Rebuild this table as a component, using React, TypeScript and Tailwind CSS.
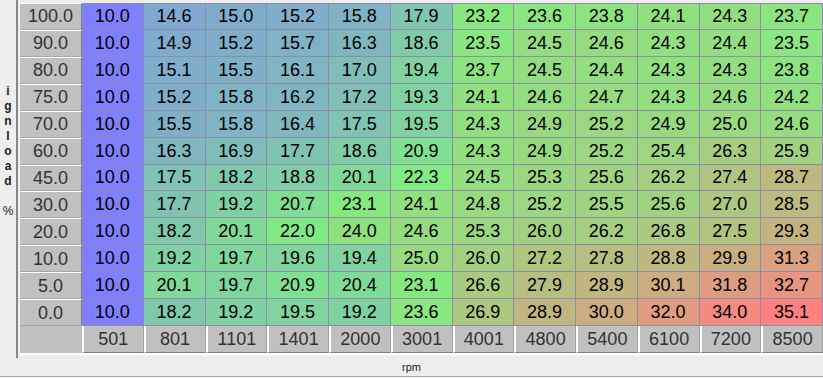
import React from "react";

const loads = ["100.0", "90.0", "80.0", "75.0", "70.0", "60.0", "45.0", "30.0", "20.0", "10.0", "5.0", "0.0"];
const rpms = ["501", "801", "1101", "1401", "2000", "3001", "4001", "4800", "5400", "6100", "7200", "8500"];

const table: number[][] = [
  [10.0, 14.6, 15.0, 15.2, 15.8, 17.9, 23.2, 23.6, 23.8, 24.1, 24.3, 23.7],
  [10.0, 14.9, 15.2, 15.7, 16.3, 18.6, 23.5, 24.5, 24.6, 24.3, 24.4, 23.5],
  [10.0, 15.1, 15.5, 16.1, 17.0, 19.4, 23.7, 24.5, 24.4, 24.3, 24.3, 23.8],
  [10.0, 15.2, 15.8, 16.2, 17.2, 19.3, 24.1, 24.6, 24.7, 24.3, 24.6, 24.2],
  [10.0, 15.5, 15.8, 16.4, 17.5, 19.5, 24.3, 24.9, 25.2, 24.9, 25.0, 24.6],
  [10.0, 16.3, 16.9, 17.7, 18.6, 20.9, 24.3, 24.9, 25.2, 25.4, 26.3, 25.9],
  [10.0, 17.5, 18.2, 18.8, 20.1, 22.3, 24.5, 25.3, 25.6, 26.2, 27.4, 28.7],
  [10.0, 17.7, 19.2, 20.7, 23.1, 24.1, 24.8, 25.2, 25.5, 25.6, 27.0, 28.5],
  [10.0, 18.2, 20.1, 22.0, 24.0, 24.6, 25.3, 26.0, 26.2, 26.8, 27.5, 29.3],
  [10.0, 19.2, 19.7, 19.6, 19.4, 25.0, 26.0, 27.2, 27.8, 28.8, 29.9, 31.3],
  [10.0, 20.1, 19.7, 20.9, 20.4, 23.1, 26.6, 27.9, 28.9, 30.1, 31.8, 32.7],
  [10.0, 18.2, 19.2, 19.5, 19.2, 23.6, 26.9, 28.9, 30.0, 32.0, 34.0, 35.1],
];

const MIN = 10.0;
const MAX = 35.1;

// blue -> green -> red, straight rgb blend
const cellColor = (v: number) => {
  const t = (v - MIN) / (MAX - MIN);
  let r, g, b;
  if (t < 0.5) {
    const s = t / 0.5;
    r = 128;
    g = 128 + 110 * s;
    b = 255 - 127 * s;
  } else {
    const s = (t - 0.5) / 0.5;
    r = 128 + 127 * s;
    g = 238 - 110 * s;
    b = 128;
  }
  return `rgb(${Math.round(r)}, ${Math.round(g)}, ${Math.round(b)})`;
};

const App: React.FC = () => {
  return (
    <div className="w-[823px] h-[378px] bg-[#eeeeee] overflow-hidden font-['Liberation_Sans',Arial,sans-serif]">
      <div className="flex h-[358px]">
        {/* y axis label */}
        <div className="w-[16px] pt-[84px] flex flex-col items-center text-[12px] font-bold leading-[15px] text-[#222]">
          {"ignload".split("").map((c, i) => (
            <span key={i}>{c}</span>
          ))}
          <span>&nbsp;</span>
          <span className="font-normal">%</span>
        </div>

        <div className="flex-1 border-l-2 border-[#888888] pl-[2px] pt-[3px] flex flex-col">
          <div className="flex flex-col h-[323px]">
            {table.map((row, ri) => (
              <div key={ri} className="flex flex-1 min-h-0">
                <div className="w-[62px] flex items-center justify-center bg-[#c0c0c0] border-t border-white border-r border-r-[#808080] border-b border-b-[#a8a8a8] text-[18px] leading-none text-[#333333]">
                  {loads[ri]}
                </div>
                <div className={`flex flex-1 border-b border-[#8a8ea8] ${ri === 0 ? "border-t" : ""}`}>
                  {row.map((v, ci) => (
                    <div
                      key={ci}
                      className="flex-1 flex items-center justify-center border-r border-[#8a8ea8] text-[18px] leading-none text-black"
                      style={{ backgroundColor: cellColor(v) }}
                    >
                      {v.toFixed(1)}
                    </div>
                  ))}
                </div>
              </div>
            ))}
          </div>

          <div className="flex h-[29px] border-b-2 border-white">
            <div className="w-[62px] bg-[#c0c0c0]" />
            <div className="flex flex-1">
              {rpms.map((r) => (
                <div
                  key={r}
                  className="flex-1 flex items-center justify-center bg-[#c0c0c0] border-l-2 border-white border-b border-b-[#808080] border-r border-r-[#a0a0a0] text-[18px] leading-none text-[#333333]"
                >
                  {r}
                </div>
              ))}
            </div>
          </div>
        </div>
      </div>

      <div className="h-[19px] flex items-center justify-center text-[11px] text-[#222] border-b border-[#a8a8a8]">
        rpm
      </div>
    </div>
  );
};

export default App;
